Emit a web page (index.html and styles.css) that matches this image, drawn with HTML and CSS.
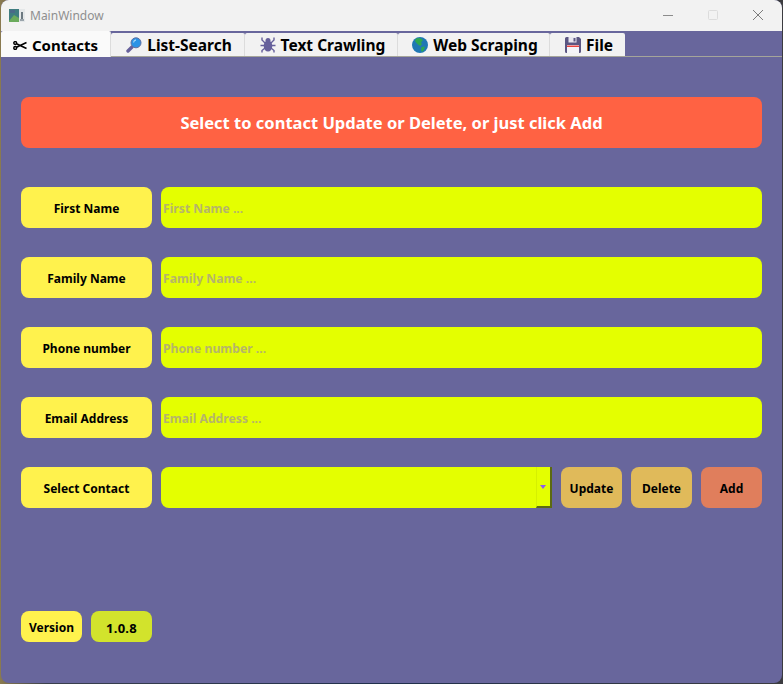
FILE: index.html
```html
<!DOCTYPE html>
<html lang="en">
<head>
<meta charset="utf-8">
<title>MainWindow</title>
<link rel="stylesheet" href="styles.css">
</head>
<body>
<div class="window">
  <header class="titlebar">
    <svg class="app-icon" width="16" height="13" viewBox="0 0 16 13"><rect width="16" height="13" fill="#e4e7e8"/><rect x="0" y="0" width="10" height="13" fill="#3f7d80"/><path d="M0 12 L5 6 L10 9 V13 H0Z" fill="#6bab5c"/><rect x="1" y="1" width="5" height="3" fill="#4a6a88"/><rect x="12" y="3" width="2" height="7" fill="#6c7880"/><rect x="11" y="10" width="4" height="2" fill="#9aa4ab"/></svg>
    <span class="title">MainWindow</span>
    <div class="controls">
      <svg width="14" height="14" viewBox="0 0 14 14"><path d="M2 7.500H12" stroke="#8c8c8c" stroke-width="1"/></svg>
      <svg width="14" height="14" viewBox="0 0 14 14"><rect x="2.500" y="2.500" width="9" height="9" rx="1" fill="none" stroke="#dcdcdc"/></svg>
      <svg width="14" height="14" viewBox="0 0 14 14"><path d="M2 2L12 12M12 2L2 12" stroke="#7c7c7c" stroke-width="1"/></svg>
    </div>
  </header>
  <nav class="tabs">
    <div class="tab tab-active tab-contacts">
      <svg class="icon" width="14" height="9" viewBox="0 0 14 9"><circle cx="2.200" cy="2" r="1.400" fill="none" stroke="#000" stroke-width="1.500"/><circle cx="2.200" cy="7" r="1.400" fill="none" stroke="#000" stroke-width="1.500"/><path d="M3.500 2.800L13.500 7.500M3.500 6.200L13.500 1.500" stroke="#000" stroke-width="1.600"/></svg>
      <span>Contacts</span>
    </div>
    <div class="tab tab-search">
      <svg class="icon" width="16" height="16" viewBox="0 0 16 16"><path d="M6 10L2 14" stroke="#66609b" stroke-width="3.400" stroke-linecap="round"/><circle cx="10" cy="5.800" r="5" fill="#2b93e6" stroke="#5f6f9f" stroke-width="1"/><path d="M7.500 5.500A3 3 0 0 1 10 3" stroke="#9fd4f7" stroke-width="1.300" fill="none"/></svg>
      <span>List-Search</span>
    </div>
    <div class="tab tab-crawl">
      <svg class="icon" width="16" height="16" viewBox="0 0 16 16"><g stroke="#66609b" stroke-width="1.400" fill="none"><path d="M5 6L2 3V0.500M11 6L14 3V0.500M4 8.500H0.500M12 8.500H15.500M5 11L2 13.500V15.500M11 11L14 13.500V15.500"/></g><ellipse cx="8" cy="9" rx="4.300" ry="5.500" fill="#66609b"/><circle cx="8" cy="3.500" r="2.500" fill="#66609b"/></svg>
      <span>Text Crawling</span>
    </div>
    <div class="tab tab-web">
      <svg class="icon" width="16" height="16" viewBox="0 0 16 16"><circle cx="8" cy="8" r="8" fill="#1f78b4"/><path d="M4 1.500L8 1L11 3L9 5.500L10 7L8.500 9L6.500 8L4.500 6L3 4ZM9.500 10L13 9.500L12 13L10 15L9 13Z" fill="#2ea84f"/></svg>
      <span>Web Scraping</span>
    </div>
    <div class="tab tab-file">
      <svg class="icon" width="16" height="16" viewBox="0 0 16 16"><path d="M0 1.500A1.500 1.500 0 0 1 1.500 0H14L16 2V14.500A1.500 1.500 0 0 1 14.500 16H1.500A1.500 1.500 0 0 1 0 14.500Z" fill="#5b5682"/><rect x="3.500" y="0" width="8" height="5.500" fill="#e8e6ef"/><rect x="8.500" y="1" width="2" height="3.500" fill="#5b5682"/><rect x="2" y="8" width="12" height="8" fill="#f4f4f8"/><rect x="2" y="8.500" width="12" height="1.500" fill="#e8413f"/></svg>
      <span>File</span>
    </div>
  </nav>
  <main class="content">
    <div class="banner">Select to contact Update or Delete, or just click Add</div>
    <div class="form">
      <div class="row"><div class="label">First Name</div><div class="field">First Name ...</div></div>
      <div class="row"><div class="label">Family Name</div><div class="field">Family Name ...</div></div>
      <div class="row"><div class="label">Phone number</div><div class="field">Phone number ...</div></div>
      <div class="row"><div class="label">Email Address</div><div class="field">Email Address ...</div></div>
      <div class="row">
        <div class="label">Select Contact</div>
        <div class="combo"><div class="combo-arrow"></div></div>
        <div class="btn btn-amber">Update</div>
        <div class="btn btn-amber">Delete</div>
        <div class="btn btn-coral">Add</div>
      </div>
    </div>
    <div class="version-row">
      <div class="badge badge-yellow">Version</div>
      <div class="badge badge-lime">1.0.8</div>
    </div>
  </main>
</div>
</body>
</html>
```
FILE: styles.css
```css
* { box-sizing: border-box; }
html, body { margin: 0; height: 100%; }
body {
  background: linear-gradient(90deg, #8a7a50 0, #3a3f4c 6%, #20304c 50%, #3c3c40 100%);
  font-family: "Noto Sans", sans-serif;
  font-weight: 700;
  color: #000;
  overflow: hidden;
}
.window {
  margin-left: 1px;
  width: 781px;
  height: 683px;
  border-radius: 8px;
  background: #68669c;
  overflow: hidden;
  display: flex;
  flex-direction: column;
}
.titlebar {
  height: 31px;
  flex: none;
  background: #f2f2f2;
  display: flex;
  align-items: center;
  padding: 0 17px 1px 8px;
}
.app-icon { margin-right: 5px; }
.title {
  font-weight: 400;
  font-size: 12px;
  color: #8f8f8f;
}
.controls { margin-left: auto; display: flex; gap: 31px; }
.tabs {
  height: 26px;
  flex: none;
  display: flex;
  align-items: flex-end;
  border-bottom: 1px solid #a5a59a;
}
.tab {
  height: 23px;
  padding-left: 3px;
  background: #f2f2f2;
  border-right: 1px solid #dcdcdc;
  border-radius: 2px 2px 0 0;
  display: flex;
  align-items: center;
  justify-content: center;
  gap: 5px;
  font-size: 15.500px;
  white-space: nowrap;
}
.tab-active { height: 26px; margin-bottom: -1px; padding: 2px 0 0; background: #fafafa; }
.tab-contacts { width: 110px; font-size: 15px; }
.tab-search { width: 134px; }
.tab-crawl { width: 153px; }
.tab-web { width: 152px; }
.tab-file { width: 75px; border-right: 0; }
.content {
  flex: 1;
  padding: 40px 20px 0;
  display: flex;
  flex-direction: column;
}
.banner {
  height: 51px;
  flex: none;
  background: #ff6243;
  border-radius: 8px;
  color: #fff;
  font-size: 16.500px;
  display: flex;
  align-items: center;
  justify-content: center;
}
.form {
  margin-top: 39px;
  display: flex;
  flex-direction: column;
  gap: 29px;
}
.row { display: flex; gap: 9px; height: 41px; }
.label, .btn, .badge {
  border-radius: 8px;
  display: flex;
  align-items: center;
  justify-content: center;
  padding-top: 2px;
  font-size: 12px;
  white-space: nowrap;
}
.label { width: 131px; flex: none; background: #fff24d; }
.field {
  flex: 1;
  background: #e4ff00;
  border-radius: 8px;
  padding: 2px 0 0 2px;
  color: #b5b56a;
  font-size: 12.200px;
  display: flex;
  align-items: center;
}
.combo {
  width: 391px;
  flex: none;
  background: #e4ff00;
  border-radius: 8px 0 8px 8px;
  display: flex;
  justify-content: flex-end;
}
.combo-arrow {
  width: 16px;
  height: 100%;
  background: #e4ff00;
  border-left: 1px solid #d6f000;
  border-right: 2px solid #5c6a10;
  border-bottom: 2px solid #5c6a10;
  position: relative;
}
.combo-arrow::after {
  content: "";
  position: absolute;
  left: 3px;
  top: 18px;
  border-left: 3.500px solid transparent;
  border-right: 3.500px solid transparent;
  border-top: 4px solid #8c5cf0;
}
.btn { width: 61px; flex: none; }
.btn-amber { background: #e0ba5a; }
.btn-coral { background: #e07e5c; }
.version-row {
  margin-top: 103px;
  display: flex;
  gap: 9px;
}
.badge { width: 61px; height: 31px; }
.badge-yellow { background: #fff24d; }
.badge-lime { background: #d2e32c; font-size: 13px; letter-spacing: 0.300px; }
```
